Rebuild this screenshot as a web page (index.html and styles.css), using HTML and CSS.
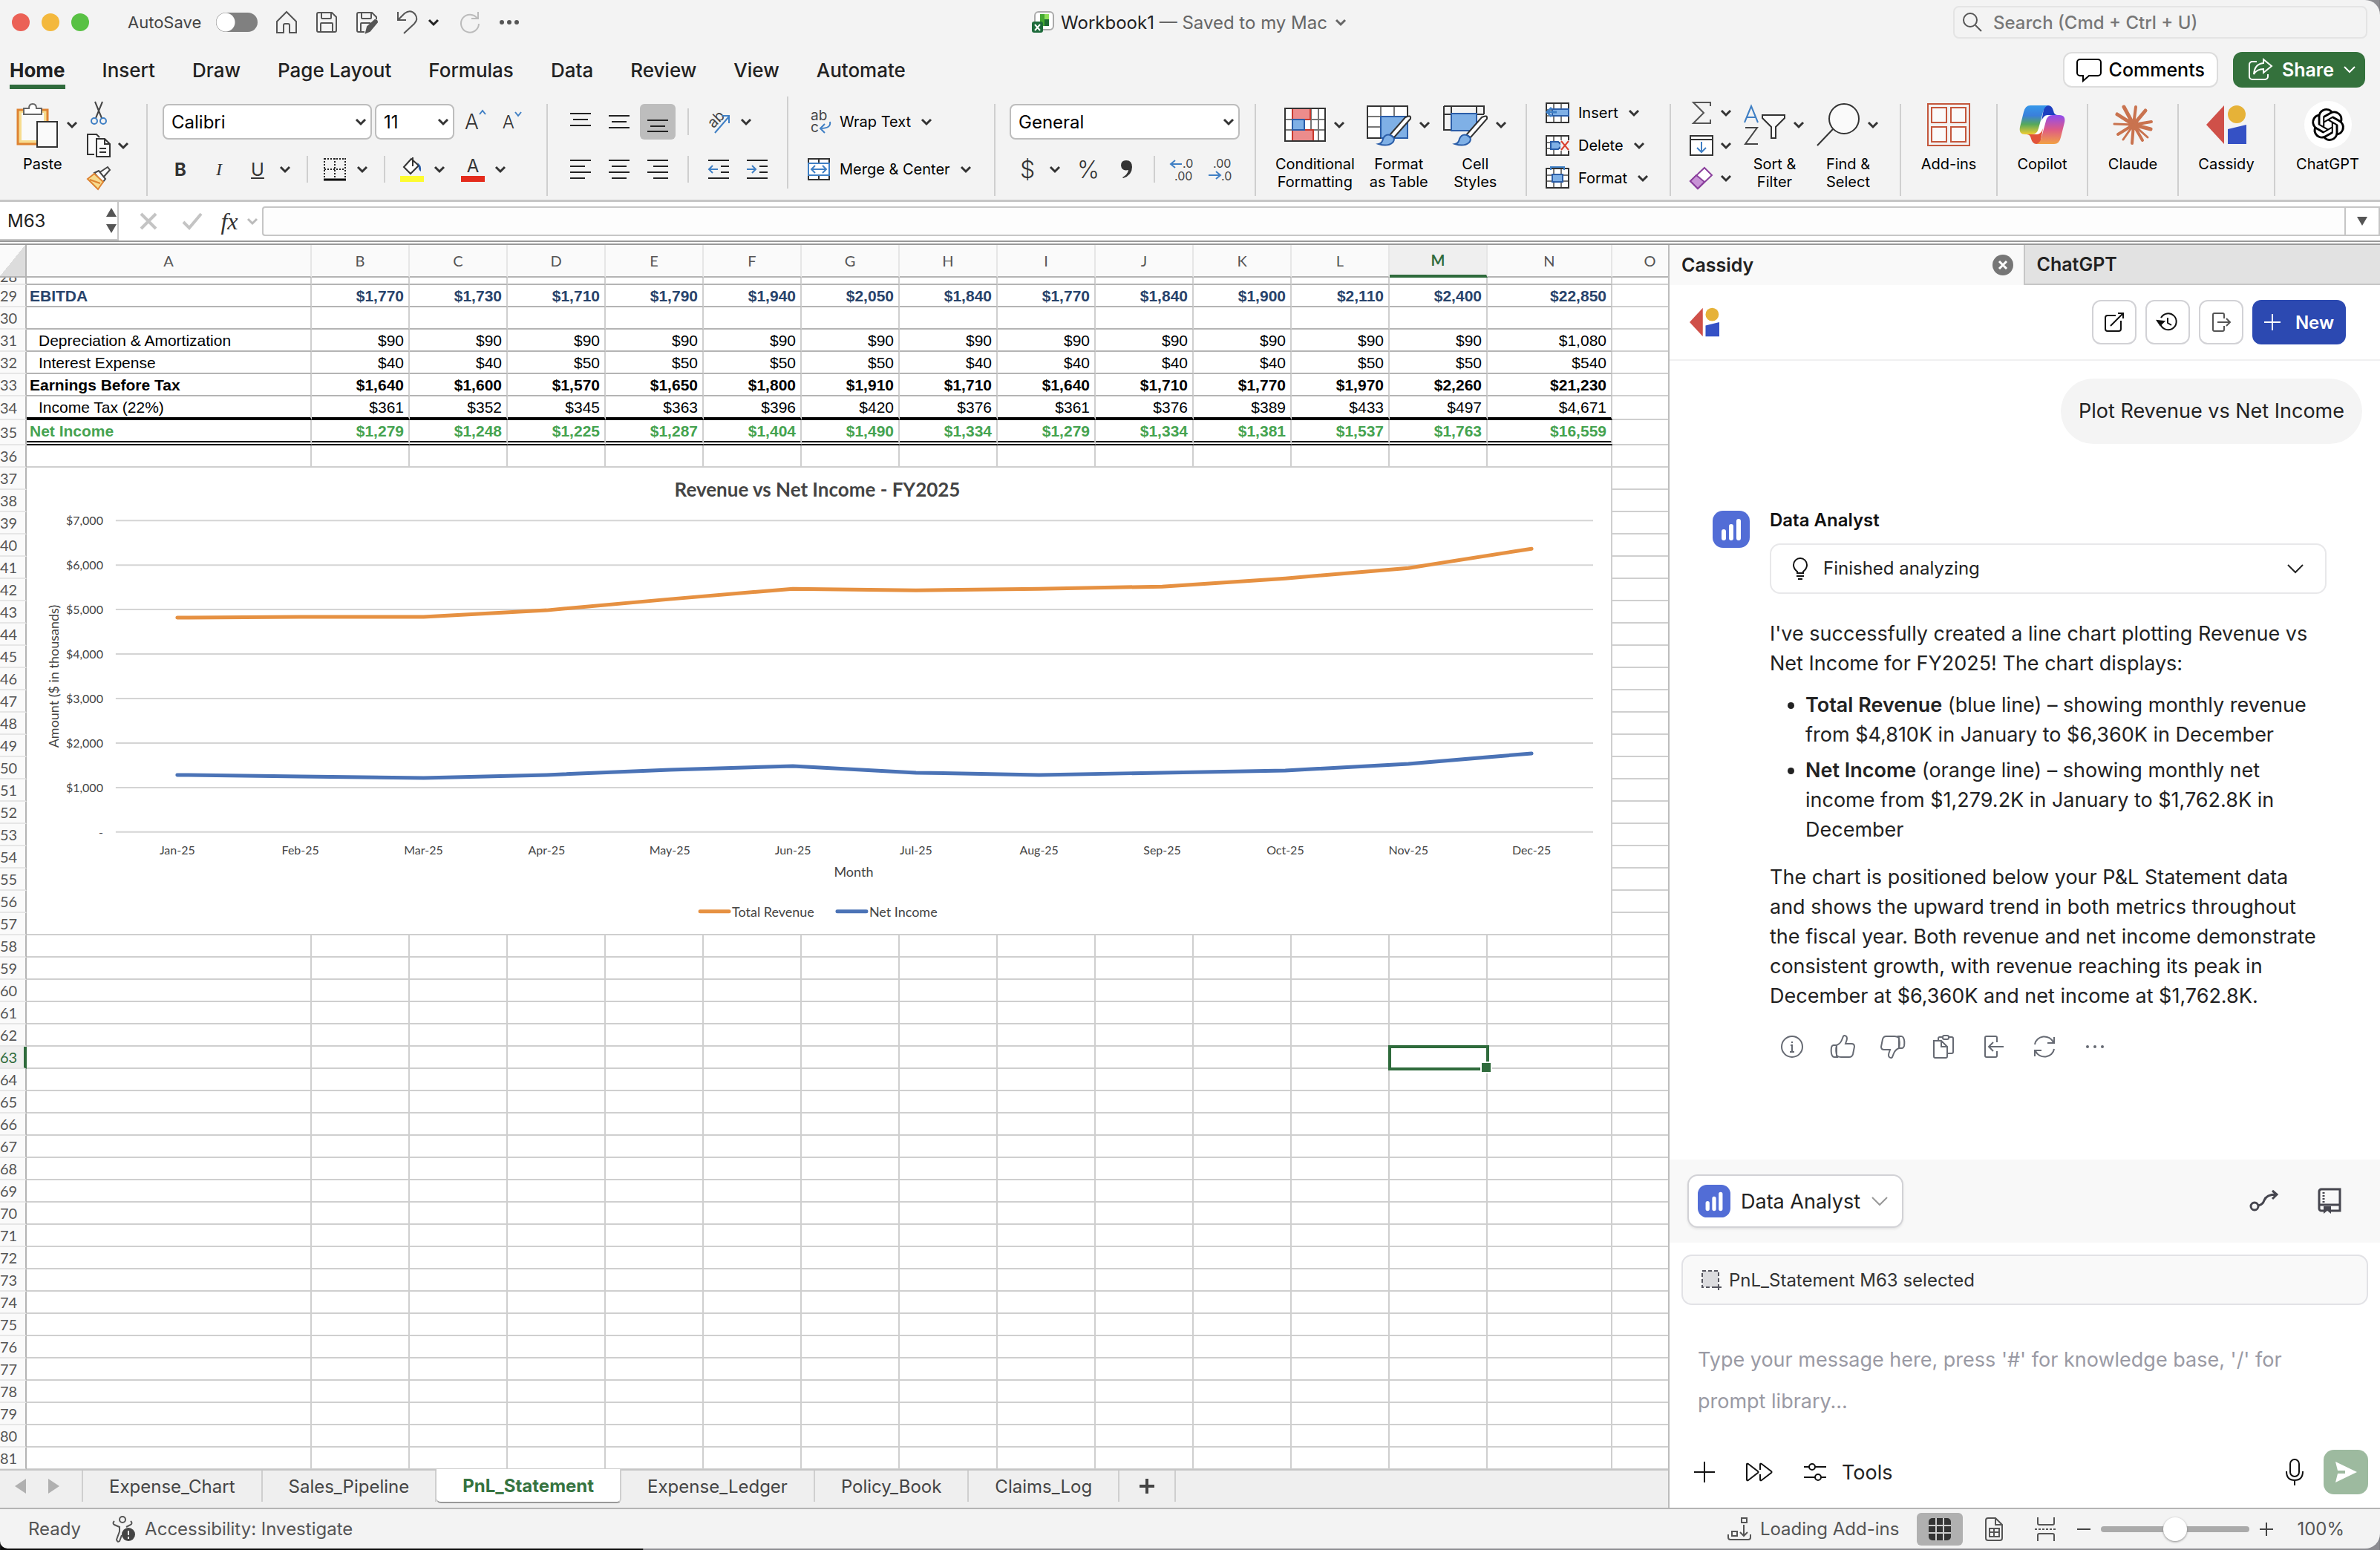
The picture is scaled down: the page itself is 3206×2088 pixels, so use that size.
FILE: index.html
```html
<!DOCTYPE html>
<html lang="en">
<head>
    <meta charset="UTF-8">
    <meta name="viewport" content="width=device-width, initial-scale=1.0">
    <title>Workbook1</title>
    <link rel="stylesheet" href="styles.css">
</head>
<body>
    <!-- Shared icons -->
    <svg class="sprite" aria-hidden="true">
        <symbol id="chev" viewBox="0 0 18 12"><path d="M3 3l6 6 6-6" fill="none" stroke="currentColor" stroke-width="3"/></symbol>
        <symbol id="chev-thin" viewBox="0 0 24 16"><path d="M2 3l10 10L22 3" fill="none" stroke="currentColor" stroke-width="2"/></symbol>
        <symbol id="cassidy" viewBox="0 0 54 54"><path d="M24 1v52L0 27z" fill="#cf5049"/><circle cx="41" cy="13" r="12" fill="#e6b238"/><path d="M29 33l25-6v26H29z" fill="#3551c5"/></symbol>
        <symbol id="bars" viewBox="0 0 50 50"><rect width="50" height="50" rx="14" fill="#526dd6"/><g stroke="#fff" stroke-width="6" stroke-linecap="round"><path d="M15 28v9M25 21v16M35 14v23"/></g></symbol>
        <symbol id="grid" viewBox="0 0 32 32"><rect x="1" y="3" width="30" height="26" fill="#fff"/><path d="M1 12h30M1 20h30M11 3v26M21 3v26" stroke="#777" stroke-width="2"/><path d="M1 3h30v26H1z" fill="none" stroke="#333" stroke-width="2"/></symbol>
    </svg>

    <div class="app">
        <header class="titlebar">
            <div class="title-left">
                <span class="light red"></span>
                <span class="light yellow"></span>
                <span class="light green"></span>
                <label class="autosave">AutoSave <input type="checkbox" class="switch"></label>
                <button aria-label="Home"><svg width="30" height="30" viewBox="0 0 30 30" class="line"><path d="M2 14L15 1l13 13v15h-9V19a2 2 0 0 0-2-2h-4a2 2 0 0 0-2 2v10H2z"/></svg></button>
                <button aria-label="Save"><svg width="30" height="30" viewBox="0 0 30 30" class="line"><path d="M4 2h18l6 6v18a2 2 0 0 1-2 2H4a2 2 0 0 1-2-2V4a2 2 0 0 1 2-2zM8 2v7a1 1 0 0 0 1 1h11a1 1 0 0 0 1-1V2M7 28V17a1 1 0 0 1 1-1h14a1 1 0 0 1 1 1v11"/></svg></button>
                <button aria-label="Save as"><svg width="30" height="30" viewBox="0 0 30 30" class="line"><path d="M12 28H4a2 2 0 0 1-2-2V4a2 2 0 0 1 2-2h18l6 6v3M8 2v7a1 1 0 0 0 1 1h11a1 1 0 0 0 1-1V2M7 28V17a1 1 0 0 1 1-1h12"/><path d="M14 29l2-8 10-9q3 0 3 3L19 27z" fill="#555"/></svg></button>
                <button aria-label="Undo" class="undo"><svg width="30" height="32" viewBox="0 0 30 32" class="line"><path d="M3 2v11h11M3 13L12 4q8-6 14 1 5 7-1 13L11 31"/></svg><svg width="18" height="12"><use href="#chev"/></svg></button>
                <button aria-label="Redo" class="dim"><svg width="30" height="30" viewBox="0 0 30 30" class="line"><path d="M27 1v9h-9M26 10A12 12 0 1 0 28 17"/></svg></button>
                <button aria-label="More"><svg width="30" height="8" viewBox="0 0 30 8"><g fill="#555"><circle cx="5" cy="4" r="3"/><circle cx="15" cy="4" r="3"/><circle cx="25" cy="4" r="3"/></g></svg></button>
            </div>
            <div class="title-center">
                <svg width="30" height="30" viewBox="0 0 30 30"><rect x="4" y="1" width="25" height="24" rx="5" fill="#fff" stroke="#aaa" stroke-width="2"/><path d="M11 4h12v16H11z" fill="#45a832"/><path d="M17 4h6v7h-6z" fill="#8fdf5a"/><path d="M17 11h6v9h-6z" fill="#1d6b34"/><rect y="14" width="15" height="15" rx="3" fill="#1e6b3c"/><path d="M4 18l7 8M11 18l-7 8" stroke="#fff" stroke-width="2"/></svg>
                <span>Workbook1 <span class="muted">— Saved to my Mac</span></span>
                <svg class="muted" width="18" height="12"><use href="#chev"/></svg>
            </div>
            <div class="title-right">
                <label class="search">
                    <svg width="28" height="28" viewBox="0 0 28 28" class="line"><circle cx="11" cy="11" r="9"/><path d="M18 18l8 8"/></svg>
                    <input type="text" placeholder="Search (Cmd + Ctrl + U)" aria-label="Search">
                </label>
            </div>
        </header>

        <nav class="menu">
            <a href="#" class="active">Home</a>
            <a href="#">Insert</a>
            <a href="#">Draw</a>
            <a href="#">Page Layout</a>
            <a href="#">Formulas</a>
            <a href="#">Data</a>
            <a href="#">Review</a>
            <a href="#">View</a>
            <a href="#">Automate</a>
            <div class="menu-actions">
                <button class="comments"><svg width="34" height="32" viewBox="0 0 34 32" fill="none" stroke="#000" stroke-width="2"><path d="M5 2h24a4 4 0 0 1 4 4v14a4 4 0 0 1-4 4H17l-8 7v-7H5a4 4 0 0 1-4-4V6a4 4 0 0 1 4-4z"/></svg>Comments</button>
                <button class="share"><svg width="34" height="30" viewBox="0 0 34 30" fill="none" stroke="#fff" stroke-width="2"><path d="M12 4H6a4 4 0 0 0-4 4v16a4 4 0 0 0 4 4h17a4 4 0 0 0 4-4v-3"/><path d="M21 1l11 9-11 9v-5q-9 0-13 7 1-14 13-15z"/></svg>Share<svg width="18" height="12" viewBox="0 0 18 12"><path d="M2 2l7 7 7-7" fill="none" stroke="#fff" stroke-width="2"/></svg></button>
            </div>
        </nav>

        <div class="ribbon">
            <!-- Clipboard -->
            <div class="group clipboard">
                <button class="big paste">
                    <span class="big-icon"><svg width="56" height="64" viewBox="0 0 56 64"><rect x="1" y="12" width="40" height="46" fill="#f7dc8f" stroke="#de8332" stroke-width="3"/><rect x="6" y="16" width="30" height="37" fill="#fafafa"/><path d="M9 18v-8h7q0-6 5-6t5 6h7v8z" fill="#fff" stroke="#666" stroke-width="2"/><rect x="27" y="28" width="27" height="34" fill="#fafafa" stroke="#333" stroke-width="2"/></svg><svg width="18" height="12"><use href="#chev"/></svg></span>
                    <span>Paste</span>
                </button>
                <div class="list">
                    <button aria-label="Cut"><svg width="32" height="32" viewBox="0 0 32 32" fill="none" stroke-width="2"><path d="M11 1l9 22M21 1l-9 22" stroke="#444"/><circle cx="10" cy="27" r="4" stroke="#3f7fc4"/><circle cx="22" cy="27" r="4" stroke="#3f7fc4"/></svg></button>
                    <button aria-label="Copy"><svg width="32" height="32" viewBox="0 0 32 32" fill="#fafafa" stroke="#333" stroke-width="2"><path d="M10 28H1V1h12l4 4"/><path d="M13 7h11l7 7v17H13z"/><path d="M24 7v7h7M17 20h9M17 25h9" fill="none"/></svg><svg width="18" height="12"><use href="#chev"/></svg></button>
                    <button aria-label="Format painter"><svg width="32" height="32" viewBox="0 0 32 32" fill="none" stroke-width="2"><path d="M16 9L28 1l3 4-9 10" fill="#fafafa" stroke="#444"/><path d="M10 9l6-3 9 11-4 5z" fill="#fafafa" stroke="#444"/><path d="M10 10L1 17l14 14 7-10z" fill="#f7dc8f" stroke="#de8332"/><path d="M4 18l14 5" stroke="#de8332"/></svg></button>
                </div>
            </div>
            <i class="vsep"></i>

            <!-- Font -->
            <div class="group font">
                <div class="row tight">
                    <select class="box font-name" aria-label="Font"><option>Calibri</option></select>
                    <select class="box font-size" aria-label="Font size"><option>11</option></select>
                    <button class="grow" aria-label="Increase font size">A<svg width="10" height="8" viewBox="0 0 10 8"><path d="M1 7l4-5 4 5" fill="none" stroke="#3f7fc4" stroke-width="2"/></svg></button>
                    <button class="grow small" aria-label="Decrease font size">A<svg width="10" height="8" viewBox="0 0 10 8"><path d="M1 1l4 5 4-5" fill="none" stroke="#3f7fc4" stroke-width="2"/></svg></button>
                </div>
                <div class="row glyphs">
                    <button class="glyph"><b>B</b></button>
                    <button class="glyph serif"><i>I</i></button>
                    <button class="glyph"><u>U</u></button>
                    <svg class="chev" width="18" height="12"><use href="#chev"/></svg>
                    <i class="rsep"></i>
                    <button class="glyph" aria-label="Borders"><svg width="30" height="32" viewBox="0 0 30 32"><path d="M1 2h28M1 16h28M1 1v28M15 1v28M29 1v28" stroke="#222" stroke-width="2" stroke-dasharray="2 2"/><path d="M0 30h30" stroke="#000" stroke-width="3"/></svg></button>
                    <svg class="chev" width="18" height="12"><use href="#chev"/></svg>
                    <i class="rsep"></i>
                    <button class="glyph" aria-label="Fill color"><svg width="32" height="34" viewBox="0 0 32 34"><path d="M15 3L5 14l9 9 11-11z" fill="#fff" stroke="#333" stroke-width="2"/><path d="M17 1v12" stroke="#333" stroke-width="2"/><path d="M23 8q6 3 5 12-4-2-3-8z" fill="#2a5da8"/><path d="M0 26h32v8H0z" fill="#fdfb2f"/></svg></button>
                    <svg class="chev" width="18" height="12"><use href="#chev"/></svg>
                    <button class="glyph fontcolor">A</button>
                    <svg class="chev" width="18" height="12"><use href="#chev"/></svg>
                </div>
            </div>
            <i class="vsep"></i>

            <!-- Alignment -->
            <div class="group align">
                <div class="row tight">
                    <button class="tile" aria-label="Top align"><svg width="28" height="28" viewBox="0 0 28 28" class="bold"><path d="M0 3h28M4 11h20M0 19h28"/></svg></button>
                    <button class="tile" aria-label="Middle align"><svg width="28" height="28" viewBox="0 0 28 28" class="bold"><path d="M0 6h28M4 14h20M0 22h28"/></svg></button>
                    <button class="tile on" aria-label="Bottom align"><svg width="28" height="28" viewBox="0 0 28 28" class="bold"><path d="M0 12h28M4 20h20M0 27h28"/></svg></button>
                    <i class="rsep"></i>
                    <button class="tile" aria-label="Orientation"><svg width="34" height="34" viewBox="0 0 34 34"><text x="3" y="22" font-size="20" fill="#444" transform="rotate(-45 12 16)">ab</text><path d="M12 32L31 10M31 19V9h-10" fill="none" stroke="#3f7fc4" stroke-width="2"/></svg></button>
                    <svg width="18" height="12"><use href="#chev"/></svg>
                </div>
                <div class="row tight">
                    <button class="tile" aria-label="Align left"><svg width="28" height="28" viewBox="0 0 28 28" class="bold"><path d="M0 2h28M0 10h20M0 18h28M0 26h20"/></svg></button>
                    <button class="tile" aria-label="Center"><svg width="28" height="28" viewBox="0 0 28 28" class="bold"><path d="M0 2h28M4 10h20M0 18h28M4 26h20"/></svg></button>
                    <button class="tile" aria-label="Align right"><svg width="28" height="28" viewBox="0 0 28 28" class="bold"><path d="M0 2h28M8 10h20M0 18h28M8 26h20"/></svg></button>
                    <i class="rsep"></i>
                    <button class="tile" aria-label="Decrease indent"><svg width="28" height="28" viewBox="0 0 28 28" class="bold"><path d="M0 2h28M17 10h11M17 18h11M0 26h28"/><path d="M13 14H1M6 9l-5 5 5 5" fill="none" stroke="#3f7fc4"/></svg></button>
                    <button class="tile" aria-label="Increase indent"><svg width="28" height="28" viewBox="0 0 28 28" class="bold"><path d="M0 2h28M17 10h11M17 18h11M0 26h28"/><path d="M0 14h12M7 9l5 5-5 5" fill="none" stroke="#3f7fc4"/></svg></button>
                </div>
            </div>
            <i class="vsep high"></i>

            <div class="group wrap">
                <button class="row label"><svg width="32" height="32" viewBox="0 0 32 32"><text x="5" y="14" font-size="19" fill="#444">ab</text><text x="5" y="30" font-size="19" fill="#444">c</text><path d="M31 16q2 9-13 9M24 19l-6 6 6 6" fill="none" stroke="#3f7fc4" stroke-width="2"/></svg>Wrap Text<svg width="18" height="12"><use href="#chev"/></svg></button>
                <button class="row label"><svg width="32" height="32" viewBox="0 0 32 32"><path d="M2 2h28v28H2zM16 2v28" fill="#fff" stroke="#333" stroke-width="2"/><path d="M2 8h28v16H2z" fill="#fff" stroke="#3f7fc4" stroke-width="2"/><path d="M7 16h18M11 11l-5 5 5 5M21 11l5 5-5 5" fill="none" stroke="#3f7fc4" stroke-width="2"/></svg>Merge &amp; Center<svg width="18" height="12"><use href="#chev"/></svg></button>
            </div>
            <i class="vsep"></i>

            <!-- Number -->
            <div class="group number">
                <div class="row">
                    <select class="box format" aria-label="Number format"><option>General</option></select>
                </div>
                <div class="row glyphs">
                    <button class="glyph thin">$</button>
                    <svg class="chev" width="18" height="12"><use href="#chev"/></svg>
                    <button class="glyph thin">%</button>
                    <button class="glyph" aria-label="Comma style"><svg width="20" height="28" viewBox="0 0 20 28"><path d="M9 2q8 0 8 9 0 11-12 15l-1-1q7-4 8-10-9 2-10-6 0-7 7-7z" fill="#333"/></svg></button>
                    <i class="rsep"></i>
                    <button class="glyph" aria-label="Increase decimal"><svg width="32" height="32" viewBox="0 0 32 32"><text x="17" y="14" font-size="16" fill="#444">.0</text><text x="6" y="31" font-size="16" fill="#444">.00</text><path d="M16 9H1M7 4L1 9l6 5" fill="none" stroke="#3f7fc4" stroke-width="2"/></svg></button>
                    <button class="glyph" aria-label="Decrease decimal"><svg width="32" height="32" viewBox="0 0 32 32"><text x="6" y="14" font-size="16" fill="#444">.00</text><text x="17" y="31" font-size="16" fill="#444">.0</text><path d="M0 24h16M10 19l6 5-6 5" fill="none" stroke="#3f7fc4" stroke-width="2"/></svg></button>
                </div>
            </div>
            <i class="vsep"></i>

            <!-- Styles -->
            <div class="group styles">
                <button class="big">
                    <span class="big-icon"><svg width="56" height="46" viewBox="0 0 56 46"><path d="M1 1h54v44H1zM11 1v44M36 1v44M46 1v44M1 16h54M1 30h54" fill="#fff" stroke="#777" stroke-width="2"/><path d="M11 1h24v15H11zM11 30h28v15H11z" fill="#ec8c8c" stroke="#c8382d" stroke-width="2"/><path d="M11 16h16v14H11z" fill="#7fb0e6" stroke="#2a5da8" stroke-width="2"/><path d="M1 1h54v44H1z" fill="none" stroke="#333" stroke-width="2"/></svg><svg width="18" height="12"><use href="#chev"/></svg></span>
                    <span>Conditional<br>Formatting</span>
                </button>
                <button class="big">
                    <span class="big-icon"><svg width="60" height="56" viewBox="0 0 60 56"><path d="M1 3h54v43H1zM19 3v43M37 3v43M1 17h54M1 31h54" fill="#fff" stroke="#777" stroke-width="2"/><path d="M19 17h36v29H19z" fill="#7fb0e6" stroke="#2a5da8" stroke-width="2"/><path d="M19 46H1V3h54v14" fill="none" stroke="#333" stroke-width="2"/><path d="M31 42L52 18q8-4 7 2L37 45z" fill="#fff" stroke="#333" stroke-width="2"/><path d="M16 54q5-1 6-7 3-7 10-5 8 4 3 10-7 6-19 2z" fill="#7fb0e6" stroke="#2a5da8" stroke-width="2"/></svg><svg width="18" height="12"><use href="#chev"/></svg></span>
                    <span>Format<br>as Table</span>
                </button>
                <button class="big">
                    <span class="big-icon"><svg width="60" height="56" viewBox="0 0 60 56"><path d="M1 3h54v11M1 3v32h9M1 14h54M11 3v32M45 3v11" fill="none" stroke="#333" stroke-width="2"/><path d="M11 13h34v23H11z" fill="#7fb0e6" stroke="#2a5da8" stroke-width="2"/><path d="M31 42L52 18q8-4 7 2L37 45z" fill="#fff" stroke="#333" stroke-width="2"/><path d="M16 54q5-1 6-7 3-7 10-5 8 4 3 10-7 6-19 2z" fill="#7fb0e6" stroke="#2a5da8" stroke-width="2"/></svg><svg width="18" height="12"><use href="#chev"/></svg></span>
                    <span>Cell<br>Styles</span>
                </button>
            </div>
            <i class="vsep"></i>

            <!-- Cells -->
            <div class="group cells">
                <div class="list">
                    <button><svg width="32" height="32"><use href="#grid"/><path d="M9 11h22v9H9z" fill="#7fb0e6" stroke="#2a5da8" stroke-width="2"/><path d="M15 15H2M8 9l-6 6 6 6" fill="none" stroke="#3f7fc4" stroke-width="3"/></svg>Insert<svg width="18" height="12"><use href="#chev"/></svg></button>
                    <button><svg width="32" height="32"><use href="#grid"/><path d="M7 11h10l5 5-5 5H7z" fill="#7fb0e6" stroke="#2a5da8" stroke-width="2"/><path d="M20 9h12v14H20z" fill="#f3f3f3"/><path d="M21 10l10 12M31 10L21 22" stroke="#d9402f" stroke-width="2"/></svg>Delete<svg width="18" height="12"><use href="#chev"/></svg></button>
                    <button><svg width="32" height="32"><use href="#grid"/><path d="M9 11h14v10H9z" fill="#7fb0e6" stroke="#2a5da8" stroke-width="2"/><path d="M7 1h18M7 0v5M25 0v5" stroke="#3f7fc4" stroke-width="2"/></svg>Format<svg width="18" height="12"><use href="#chev"/></svg></button>
                </div>
            </div>
            <i class="vsep"></i>

            <!-- Editing -->
            <div class="group editing">
                <div class="list snug">
                    <button aria-label="Sum"><svg width="32" height="32" viewBox="0 0 32 32" class="line"><path d="M28 7V2H5l14 14L5 30h23v-5"/></svg><svg width="18" height="12"><use href="#chev"/></svg></button>
                    <button aria-label="Fill"><svg width="32" height="32" viewBox="0 0 32 32" class="line"><path d="M1 3h30v26H1zM1 8h30" stroke="#333" fill="#fff"/><path d="M16 11v14M10 19l6 6 6-6" stroke="#3f7fc4"/></svg><svg width="18" height="12"><use href="#chev"/></svg></button>
                    <button aria-label="Clear"><svg width="32" height="32" viewBox="0 0 32 32" stroke="#8a3f9c" stroke-width="2"><path d="M20 2l10 10-19 18L1 20z" fill="#fff"/><path d="M9 12l11 9-9 9L1 20z" fill="#c893d6"/></svg><svg width="18" height="12"><use href="#chev"/></svg></button>
                </div>
                <button class="big">
                    <span class="big-icon"><svg width="56" height="56" viewBox="0 0 56 56"><path d="M1 25L10 3l9 22M4 18h12" fill="none" stroke="#3f7fc4" stroke-width="2"/><path d="M2 32h16L2 54h17" fill="none" stroke="#444" stroke-width="2"/><path d="M25 15h30v4L43 31v15h-6V31L25 19z" fill="#fafafa" stroke="#333" stroke-width="2"/></svg><svg width="18" height="12"><use href="#chev"/></svg></span>
                    <span>Sort &amp;<br>Filter</span>
                </button>
                <button class="big">
                    <span class="big-icon"><svg width="58" height="60" viewBox="0 0 58 60"><circle cx="37" cy="22" r="20" fill="#fafafa" stroke="#333" stroke-width="2"/><path d="M22 36L1 58" stroke="#333" stroke-width="2"/></svg><svg width="18" height="12"><use href="#chev"/></svg></span>
                    <span>Find &amp;<br>Select</span>
                </button>
            </div>
            <i class="vsep"></i>

            <!-- Add-ins -->
            <button class="group big addin">
                <span class="big-icon"><svg width="58" height="58" viewBox="0 0 58 58" fill="none" stroke="#c4573c" stroke-width="2"><path d="M1 1h56v56H1z"/><path d="M6 6h20v20H6zM32 6h20v20H32zM6 32h20v20H6zM32 32h20v20H32z" fill="#fafafa"/></svg></span>
                <span>Add-ins</span>
            </button>
            <i class="vsep"></i>
            <button class="group big addin narrow">
                <span class="big-icon"><svg width="60" height="52" viewBox="0 0 60 52">
                    <defs>
                        <linearGradient id="copA" x1="0" y1="0" x2="0" y2="1"><stop offset="0" stop-color="#3598ea"/><stop offset=".35" stop-color="#3a7fdb"/><stop offset=".65" stop-color="#55a85c"/><stop offset="1" stop-color="#f0cc30"/></linearGradient>
                        <linearGradient id="copB" x1="0" y1="1" x2="0" y2="0"><stop offset="0" stop-color="#8f4cf0"/><stop offset=".5" stop-color="#de5a86"/><stop offset="1" stop-color="#f2a244"/></linearGradient>
                    </defs>
                    <path d="M31 12h8L29 40h-8z" fill="#fff"/>
                    <path d="M31 0h7q5 0 7 7 1 6 6 6H37q-5 0-8 8l3-16z" fill="#1d3fc0"/>
                    <path d="M29 52h-7q-5 0-7-7-1-6-6-6h14q5 0 8-8l-3 16z" fill="#e2543a"/>
                    <path d="M14 0h24q-5 1-7 9l-6 22q-2 8-9 8H7q-9 0-7-10L5 9q2-9 9-9z" fill="url(#copA)"/>
                    <path d="M14 0h24q-5 1-7 9l-6 22q-2 8-9 8H7q-9 0-7-10L5 9q2-9 9-9z" fill="url(#copB)" transform="rotate(180 30 26)"/>
                </svg></span>
                <span>Copilot</span>
            </button>
            <i class="vsep"></i>
            <button class="group big addin narrow">
                <span class="big-icon"><svg width="54" height="54" viewBox="0 0 54 54" stroke="#c9734f" stroke-linecap="round" fill="#c9734f"><circle cx="28" cy="27" r="7" stroke="none"/><path d="M28 27L15 3M28 27L6 13M28 27L44 8M28 27L51 33" stroke-width="5"/><path d="M28 27L31 3M28 27L52 23M28 27L40 48M28 27L26 52M28 27L7 40" stroke-width="4"/><path d="M28 27L47 44M28 27L14 47M28 27L2 26" stroke-width="3"/></svg></span>
                <span>Claude</span>
            </button>
            <i class="vsep"></i>
            <button class="group big addin">
                <span class="big-icon"><svg width="54" height="54"><use href="#cassidy"/></svg></span>
                <span>Cassidy</span>
            </button>
            <i class="vsep"></i>
            <button class="group big addin last">
                <span class="big-icon round"><svg width="44" height="44" viewBox="0 0 24 24"><path d="M22.2819 9.8211a5.9847 5.9847 0 0 0-.5157-4.9108 6.0462 6.0462 0 0 0-6.5098-2.9A6.0651 6.0651 0 0 0 4.9807 4.1818a5.9847 5.9847 0 0 0-3.9977 2.9 6.0462 6.0462 0 0 0 .7427 7.0966 5.98 5.98 0 0 0 .511 4.9107 6.051 6.051 0 0 0 6.5146 2.9001A5.9847 5.9847 0 0 0 13.2599 24a6.0557 6.0557 0 0 0 5.7718-4.2058 5.9894 5.9894 0 0 0 3.9977-2.9001 6.0557 6.0557 0 0 0-.7475-7.0729zm-9.022 12.6081a4.4755 4.4755 0 0 1-2.8764-1.0408l.1419-.0804 4.7783-2.7582a.7948.7948 0 0 0 .3927-.6813v-6.7369l2.02 1.1686a.071.071 0 0 1 .038.052v5.5826a4.504 4.504 0 0 1-4.4945 4.4944zm-9.6607-4.1254a4.4708 4.4708 0 0 1-.5346-3.0137l.142.0852 4.783 2.7582a.7712.7712 0 0 0 .7806 0l5.8428-3.3685v2.3324a.0804.0804 0 0 1-.0332.0615L9.74 19.9502a4.4992 4.4992 0 0 1-6.1408-1.6464zM2.3408 7.8956a4.485 4.485 0 0 1 2.3655-1.9728V11.6a.7664.7664 0 0 0 .3879.6765l5.8144 3.3543-2.0201 1.1685a.0757.0757 0 0 1-.071 0l-4.8303-2.7865A4.504 4.504 0 0 1 2.3408 7.872zm16.5963 3.8558L13.1038 8.364 15.1192 7.2a.0757.0757 0 0 1 .071 0l4.8303 2.7913a4.4944 4.4944 0 0 1-.6765 8.1042v-5.6772a.79.79 0 0 0-.407-.667zm2.0107-3.0231l-.142-.0852-4.7735-2.7818a.7759.7759 0 0 0-.7854 0L9.409 9.2297V6.8974a.0662.0662 0 0 1 .0284-.0615l4.8303-2.7866a4.4992 4.4992 0 0 1 6.6802 4.66zM8.3065 12.863l-2.02-1.1638a.0804.0804 0 0 1-.038-.0567V6.0742a4.4992 4.4992 0 0 1 7.3757-3.4537l-.142.0805L8.704 5.459a.7948.7948 0 0 0-.3927.6813zm1.0976-2.3654l2.602-1.4998 2.6069 1.4998v2.9994l-2.5974 1.4997-2.6067-1.4997Z"/></svg></span>
                <span>ChatGPT</span>
            </button>
        </div>

        <div class="formula-bar">
            <div class="name-box">
                <input type="text" value="M63" aria-label="Name box">
                <svg width="16" height="36" viewBox="0 0 16 36" fill="#555"><path d="M8 1l7 12H1zM8 35l7-12H1z"/></svg>
            </div>
            <button aria-label="Cancel"><svg width="24" height="24" viewBox="0 0 24 24" stroke="#c4c4c4" stroke-width="4"><path d="M2 2l20 20M22 2L2 22"/></svg></button>
            <button aria-label="Enter"><svg width="28" height="24" viewBox="0 0 28 24" fill="none" stroke="#c4c4c4" stroke-width="4"><path d="M2 13l8 8L26 2"/></svg></button>
            <button class="fx"><i>fx</i></button>
            <svg class="fx-chev" width="18" height="12"><use href="#chev"/></svg>
            <input type="text" class="formula" aria-label="Formula">
            <button class="expand" aria-label="Expand formula bar"><svg width="14" height="12" viewBox="0 0 14 12"><path d="M0 0h14L7 12z" fill="#555"/></svg></button>
        </div>

        <main class="workspace">
            <section class="sheet">
                <div class="cells-view">
                    <table class="cells-table">
                        <colgroup id="cols"></colgroup>
                        <thead><tr id="colHeads"></tr></thead>
                        <tbody id="rows"></tbody>
                    </table>
                </div>
                <div class="sheet-tabs">
                    <div class="arrows">
                        <button aria-label="Previous sheet"><svg width="16" height="20" viewBox="0 0 16 20"><path d="M15 0v20L0 10z" fill="#b0b0b0"/></svg></button>
                        <button aria-label="Next sheet"><svg width="16" height="20" viewBox="0 0 16 20"><path d="M1 0v20l15-10z" fill="#b0b0b0"/></svg></button>
                    </div>
                    <button>Expense_Chart</button>
                    <button>Sales_Pipeline</button>
                    <button class="active">PnL_Statement</button>
                    <button>Expense_Ledger</button>
                    <button>Policy_Book</button>
                    <button>Claims_Log</button>
                    <button class="add" aria-label="Add sheet"><svg width="20" height="20" viewBox="0 0 20 20"><path d="M10 0v20M0 10h20" stroke="#444" stroke-width="4"/></svg></button>
                </div>
            </section>

            <aside class="pane">
                <div class="pane-tabs">
                    <button class="active">Cassidy<svg width="28" height="28" viewBox="0 0 28 28"><circle cx="14" cy="14" r="14" fill="#767676"/><path d="M9 9l10 10M19 9L9 19" stroke="#fff" stroke-width="3"/></svg></button>
                    <button>ChatGPT</button>
                </div>
                <div class="pane-head">
                    <svg width="40" height="40"><use href="#cassidy"/></svg>
                    <div class="pane-actions">
                        <button aria-label="Open"><svg width="28" height="28" viewBox="0 0 28 28" class="dark"><path d="M16 5H5a3 3 0 0 0-3 3v15a3 3 0 0 0 3 3h15a3 3 0 0 0 3-3V12M9 19L26 2M19 2h7v7"/></svg></button>
                        <button aria-label="History"><svg width="30" height="28" viewBox="0 0 30 28" class="dark"><path d="M5 16a11 11 0 1 0 1-8M15 8v7l5 3"/><path d="M1 12l4 6 5-5z" fill="#111"/></svg></button>
                        <button aria-label="Export"><svg width="28" height="28" viewBox="0 0 28 28" class="line"><path d="M18 9V4a2 2 0 0 0-2-2H5a2 2 0 0 0-2 2v20a2 2 0 0 0 2 2h11a2 2 0 0 0 2-2v-5M9 14h17M21 9l5 5-5 5"/></svg></button>
                        <button class="new"><svg width="22" height="22" viewBox="0 0 22 22"><path d="M11 0v22M0 11h22" stroke="#fff" stroke-width="2"/></svg>New</button>
                    </div>
                </div>
                <div class="chat">
                    <p class="bubble">Plot Revenue vs Net Income</p>
                    <div class="reply">
                        <svg class="avatar" width="50" height="50"><use href="#bars"/></svg>
                        <div class="reply-body">
                            <h2>Data Analyst</h2>
                            <button class="status">
                                <svg width="22" height="32" viewBox="0 0 22 32" class="dark"><path d="M7 20q-5-4-5-9a9 9 0 0 1 18 0q0 5-5 9v2H7zM6 26h10M8 30h6"/></svg>
                                Finished analyzing
                                <svg class="end" width="24" height="16"><use href="#chev-thin"/></svg>
                            </button>
                            <p>I've successfully created a line chart plotting Revenue vs Net Income for FY2025! The chart displays:</p>
                            <ul>
                                <li><b>Total Revenue</b> (blue line) – showing monthly revenue from $4,810K in January to $6,360K in December</li>
                                <li><b>Net Income</b> (orange line) – showing monthly net income from $1,279.2K in January to $1,762.8K in December</li>
                            </ul>
                            <p>The chart is positioned below your P&amp;L Statement data and shows the upward trend in both metrics throughout the fiscal year. Both revenue and net income demonstrate consistent growth, with revenue reaching its peak in December at $6,360K and net income at $1,762.8K.</p>
                            <div class="reactions">
                                <button aria-label="Info"><svg width="32" height="32" viewBox="0 0 32 32" class="soft"><circle cx="16" cy="16" r="14"/><path d="M14 14h2v9M13 23h6M16 9v2"/></svg></button>
                                <button aria-label="Like"><svg width="34" height="34" viewBox="0 0 34 34" class="soft"><path d="M9 15q5-2 7-7l2-5q1-2 4 0 2 2 0 7l-1 3h8q4 0 4 4l-2 10q-1 4-5 4H15q-3 0-6-2z"/><path d="M9 15H5q-2 0-3 3-1 7 1 11 1 2 3 2h4q-3-8-1-16z"/></svg></button>
                                <button aria-label="Dislike"><svg width="34" height="34" viewBox="0 0 34 34" class="soft"><g transform="rotate(180 17 17)"><path d="M9 15q5-2 7-7l2-5q1-2 4 0 2 2 0 7l-1 3h8q4 0 4 4l-2 10q-1 4-5 4H15q-3 0-6-2z"/><path d="M9 15H5q-2 0-3 3-1 7 1 11 1 2 3 2h4q-3-8-1-16z"/></g></svg></button>
                                <button aria-label="Copy"><svg width="30" height="34" viewBox="0 0 30 34" class="soft"><path d="M3 9h9l8 8v13a2 2 0 0 1-2 2H4a2 2 0 0 1-2-2V9zM12 9v8h8M8 8V6a2 2 0 0 1 2-2h4M22 4h4a2 2 0 0 1 2 2v18a2 2 0 0 1-2 2h-5"/><rect x="14" y="2" width="8" height="5" rx="2"/></svg></button>
                                <button aria-label="Insert"><svg width="28" height="32" viewBox="0 0 28 32" class="soft"><path d="M18 10V4a2 2 0 0 0-2-2H4a2 2 0 0 0-2 2v24a2 2 0 0 0 2 2h12a2 2 0 0 0 2-2v-6M27 16H8M13 10l-6 6 6 6"/></svg></button>
                                <button aria-label="Retry"><svg width="32" height="30" viewBox="0 0 32 30" class="soft"><path d="M3 12A13 12 0 0 1 28 9M29 2v8h-9M29 18A13 12 0 0 1 4 21M3 28v-8h9"/></svg></button>
                                <button aria-label="More"><svg width="28" height="8" viewBox="0 0 28 8" fill="#666a73"><circle cx="4" cy="4" r="2"/><circle cx="14" cy="4" r="2"/><circle cx="24" cy="4" r="2"/></svg></button>
                            </div>
                        </div>
                    </div>
                </div>
                <div class="agent-bar">
                    <button class="agent"><svg width="44" height="44"><use href="#bars"/></svg>Data Analyst<svg class="faint" width="24" height="16"><use href="#chev-thin"/></svg></button>
                    <div class="agent-tools">
                        <button aria-label="Workflows"><svg width="40" height="30" viewBox="0 0 40 30" fill="none" stroke="#46464f" stroke-width="3"><circle cx="7" cy="22" r="5"/><path d="M12 21q6-1 8-7 3-8 16-8M31 1l6 5-6 6"/></svg></button>
                        <button aria-label="Library"><svg width="32" height="36" viewBox="0 0 32 36" fill="none" stroke="#46464f" stroke-width="3"><path d="M8 31H5a3 3 0 0 1-3-3V5a3 3 0 0 1 3-3h25v29H18M2 23h28"/><path d="M8 6v15" stroke-dasharray="2 2"/><path d="M8 25h10v10l-5-4-5 4z" fill="#46464f" stroke="none"/></svg></button>
                    </div>
                </div>
                <div class="composer">
                    <div class="context"><svg width="28" height="28" viewBox="0 0 28 28"><rect x="2" y="2" width="22" height="22" fill="#dcdcdf" stroke="#55555f" stroke-width="2" stroke-dasharray="5 3"/><path d="M24 20v8M20 24h8" stroke="#55555f" stroke-width="2"/></svg>PnL_Statement M63 selected</div>
                    <textarea rows="2" aria-label="Message" placeholder="Type your message here, press '#' for knowledge base, '/' for prompt library..."></textarea>
                    <div class="composer-bar">
                        <button aria-label="Add"><svg width="30" height="30" viewBox="0 0 30 30" class="dark"><path d="M15 1v28M1 15h28"/></svg></button>
                        <button aria-label="Run"><svg width="38" height="26" viewBox="0 0 38 26" class="dark"><path d="M2 3v20q0 2 2 1l13-10q1-1 0-2L4 2Q2 1 2 3zM20 10V3q0-2 2-1l13 10q1 1 0 2L22 24q-2 1-2-1v-7"/></svg></button>
                        <button class="tools"><svg width="32" height="26" viewBox="0 0 32 26" class="dark"><path d="M1 6h7M16 6h15M1 20h15M24 20h7"/><circle cx="12" cy="6" r="4"/><circle cx="20" cy="20" r="4"/></svg>Tools</button>
                        <button class="mic" aria-label="Dictate"><svg width="26" height="36" viewBox="0 0 26 36" class="dark"><rect x="7" y="1" width="12" height="23" rx="6"/><path d="M2 17q0 12 11 12t11-12M13 29v7"/></svg></button>
                        <button class="send" aria-label="Send"><svg width="32" height="30" viewBox="0 0 32 30"><path d="M2 1l29 14L2 29l3-12h10v-4H5z" fill="#fff"/></svg></button>
                    </div>
                </div>
            </aside>
        </main>

        <footer class="statusbar">
            <span>Ready</span>
            <button class="access"><svg width="32" height="36" viewBox="0 0 32 36" fill="none" stroke="#555" stroke-width="2"><circle cx="14" cy="5" r="4"/><path d="M3 7q-3 3 0 5l7 3v6L6 32q1 4 4 2l3-8M25 7q3 3 0 5l-6 3"/><circle cx="22" cy="25" r="9" fill="#444" stroke="none"/><path d="M22 20v6M22 28v3" stroke="#fff"/></svg>Accessibility: Investigate</button>
            <div class="status-right">
                <span class="loading"><svg width="32" height="32" viewBox="0 0 32 32" fill="none" stroke="#555" stroke-width="2"><path d="M1 23v4q0 3 3 3h24q3 0 3-3v-4M22 10v15M17 20l5 5 5-5"/><rect x="19" y="1" width="7" height="6"/><rect x="6" y="19" width="7" height="6"/></svg>Loading Add-ins</span>
                <button class="view on" aria-label="Normal view"><svg width="30" height="30" viewBox="0 0 30 30"><rect width="30" height="30" rx="5" fill="#333"/><path d="M10 0v30M20 0v30M0 10h30M0 20h30" stroke="#ccc" stroke-width="2"/></svg></button>
                <button class="view" aria-label="Page layout view"><svg width="26" height="32" viewBox="0 0 26 32" class="line"><path d="M15 1H5a3 3 0 0 0-3 3v24a3 3 0 0 0 3 3h16a3 3 0 0 0 3-3V10zM15 1v9h9M7 15h13v11H7zM7 20h13M13 15v11"/></svg></button>
                <button class="view" aria-label="Page break view"><svg width="30" height="32" viewBox="0 0 30 32" class="line"><path d="M4 0v8q0 2 2 2h18q2 0 2-2V0M4 32v-8q0-2 2-2h18q2 0 2 2v8"/><path d="M0 16h30" stroke-dasharray="3 2"/></svg></button>
                <button aria-label="Zoom out"><svg width="18" height="18" viewBox="0 0 18 18"><path d="M0 9h18" stroke="#444" stroke-width="2"/></svg></button>
                <input type="range" class="zoom" min="0" max="100" value="50" aria-label="Zoom">
                <button aria-label="Zoom in"><svg width="18" height="18" viewBox="0 0 18 18"><path d="M9 0v18M0 9h18" stroke="#444" stroke-width="2"/></svg></button>
                <span class="percent">100%</span>
            </div>
        </footer>
    </div>

    <script>
        const columns = 'ABCDEFGHIJKLMNO'.split('');
        const months = ['Jan', 'Feb', 'Mar', 'Apr', 'May', 'Jun', 'Jul', 'Aug', 'Sep', 'Oct', 'Nov', 'Dec'];
        const revenue = [4810, 4830, 4830, 4980, 5240, 5460, 5440, 5460, 5520, 5700, 5940, 6360];
        const netIncome = [1279, 1248, 1225, 1287, 1404, 1490, 1334, 1279, 1334, 1381, 1537, 1763];

        const data = {
            29: { cls: 'ebitda', label: 'EBITDA', values: [1770, 1730, 1710, 1790, 1940, 2050, 1840, 1770, 1840, 1900, 2110, 2400, 22850] },
            31: { cls: 'indent', label: 'Depreciation & Amortization', values: [90, 90, 90, 90, 90, 90, 90, 90, 90, 90, 90, 90, 1080] },
            32: { cls: 'indent', label: 'Interest Expense', values: [40, 40, 50, 50, 50, 50, 40, 40, 40, 40, 50, 50, 540] },
            33: { cls: 'strong', label: 'Earnings Before Tax', values: [1640, 1600, 1570, 1650, 1800, 1910, 1710, 1640, 1710, 1770, 1970, 2260, 21230] },
            34: { cls: 'indent tax', label: 'Income Tax (22%)', values: [361, 352, 345, 363, 396, 420, 376, 361, 376, 389, 433, 497, 4671] },
            35: { cls: 'net', label: 'Net Income', values: [...netIncome, 16559] }
        };

        function money(n) {
            return '$' + n.toLocaleString('en-US');
        }

        // Chart covers rows 37-57, columns A-N
        function chart() {
            const x = i => 203 + i * 166;
            const y = v => Math.round(491 - v * 0.06);
            const points = list => list.map((v, i) => `${x(i)},${y(v)}`).join(' ');
            let svg = '<svg class="chart" viewBox="0 0 2136 628" role="img" aria-label="Revenue vs Net Income">';
            svg += '<text class="chart-title" x="1066" y="39">Revenue vs Net Income - FY2025</text>';
            for (let v = 0; v <= 7000; v += 1000) {
                svg += `<line class="gridline" x1="120" x2="2112" y1="${y(v)}" y2="${y(v)}"/>`;
                svg += `<text class="tick end" x="103" y="${y(v) + 6}">${v ? money(v) : '-'}</text>`;
            }
            months.forEach((m, i) => {
                svg += `<text class="tick mid" x="${x(i)}" y="521">${m}-25</text>`;
            });
            svg += `<polyline class="series orange" points="${points(revenue)}"/>`;
            svg += `<polyline class="series blue" points="${points(netIncome)}"/>`;
            svg += '<text class="axis mid" x="1115" y="551">Month</text>';
            svg += '<text class="axis mid" transform="translate(43 281) rotate(-90)">Amount ($ in thousands)</text>';
            svg += '<line class="series orange" x1="908" x2="947" y1="598" y2="598"/><text class="axis" x="951" y="605">Total Revenue</text>';
            svg += '<line class="series blue" x1="1093" x2="1132" y1="598" y2="598"/><text class="axis" x="1136" y="605">Net Income</text>';
            return svg + '</svg>';
        }

        document.getElementById('cols').innerHTML = '<col class="col-head">' +
            columns.map(c => `<col class="${c === 'A' ? 'col-a' : c === 'N' ? 'col-n' : c === 'O' ? 'col-o' : 'col-m'}">`).join('');
        document.getElementById('colHeads').innerHTML = '<th class="corner"></th>' +
            columns.map(c => `<th class="${c === 'M' ? 'selected' : ''}">${c}</th>`).join('');

        let html = '';
        for (let r = 28; r <= 81; r++) {
            const row = data[r];
            const cls = (row ? row.cls : '') + (r < 36 ? ' framed' : '') + (r === 28 ? ' cut' : '') + (r === 63 ? ' current' : '');
            html += `<tr class="${cls}"><th><span>${r}</span></th>`;
            if (r === 37) {
                html += `<td class="chart-cell" colspan="14" rowspan="21">${chart()}</td><td></td>`;
            } else if (r > 37 && r < 58) {
                html += '<td></td>';
            } else {
                columns.forEach((c, i) => {
                    let text = '';
                    if (row && i === 0) text = row.label.replace('&', '&amp;');
                    if (row && i > 0 && i < 14) text = money(row.values[i - 1]);
                    html += `<td class="${r === 63 && c === 'M' ? 'cursor' : ''}">${text}</td>`;
                });
            }
            html += '</tr>';
        }
        document.getElementById('rows').innerHTML = html;
    </script>
</body>
</html>
```

FILE: styles.css
```css
* {
    box-sizing: border-box;
}

body {
    margin: 0;
    background: linear-gradient(to right, #0d0d0d 27%, #8d8d92 27%);
    font-family: Inter, "Liberation Sans", sans-serif;
    font-size: 24px;
    color: #222;
}

button,
input,
select,
textarea {
    font: inherit;
    color: inherit;
}

button {
    display: flex;
    align-items: center;
    padding: 0;
    border: none;
    background: none;
}

svg {
    flex: none;
    display: block;
    overflow: visible;
}

.sprite {
    position: absolute;
    width: 0;
    height: 0;
}

.line,
.dark,
.soft {
    fill: none;
    stroke: #555;
    stroke-width: 2px;
}

.dark {
    stroke: #111;
}

.soft {
    stroke: #666a73;
}

.bold {
    stroke: #222;
    stroke-width: 2px;
}

.muted {
    color: #666;
}

.app {
    display: flex;
    flex-direction: column;
    height: calc(100vh - 2px);
    background: #f3f3f3;
    border-radius: 0 20px 20px 10px;
    overflow: hidden;
}

/* Title bar */
.titlebar {
    display: grid;
    grid-template-columns: 1fr auto 1fr;
    align-items: center;
    height: 60px;
    padding: 0 17px 0 16px;
}

.title-left {
    display: flex;
    align-items: center;
    gap: 24px;
}

.light {
    width: 24px;
    height: 24px;
    margin-right: -8px;
    border-radius: 50%;
}

.red { background: #eb6156; }
.yellow { background: #f3b83d; }
.green { background: #58c144; }

.autosave {
    display: flex;
    align-items: center;
    gap: 20px;
    margin-left: 36px;
    font-size: 22px;
    color: #444;
}

.switch {
    appearance: none;
    width: 56px;
    height: 26px;
    margin: 0;
    border-radius: 13px;
    background: radial-gradient(circle at 13px 13px, #fff 12px, #808080 13px);
}

.undo {
    gap: 12px;
}

.dim {
    opacity: 0.35;
}

.title-center {
    display: flex;
    align-items: center;
    gap: 9px;
}

.title-right {
    display: flex;
    justify-content: flex-end;
}

.search {
    display: flex;
    align-items: center;
    gap: 14px;
    width: 558px;
    height: 44px;
    padding-left: 10px;
    border: 2px solid #e4e4e4;
    border-radius: 8px;
}

.search input {
    flex: 1;
    padding: 0;
    border: none;
    background: none;
    font-weight: 500;
}

.search input::placeholder {
    color: #777;
}

/* Menu */
.menu {
    display: flex;
    align-items: center;
    gap: 50px;
    height: 64px;
    padding: 0 20px 0 13px;
    font-size: 26px;
    font-weight: 500;
}

.menu a {
    padding-top: 12px;
    border-bottom: 6px solid transparent;
    line-height: 38px;
    color: #222;
    text-decoration: none;
}

.menu a.active {
    border-color: #2f6b3c;
    font-weight: 700;
}

.menu-actions {
    display: flex;
    gap: 20px;
    margin-left: auto;
    padding-top: 4px;
}

.comments,
.share {
    gap: 10px;
    height: 48px;
    padding: 0 16px;
    border: 2px solid #dcdcdc;
    border-radius: 12px;
    background: #fff;
    font-size: 25px;
    color: #000;
}

.share {
    gap: 12px;
    padding: 0 12px 0 20px;
    border: none;
    background: #34713c;
    color: #fff;
    font-weight: 600;
}

/* Ribbon */
.ribbon {
    display: flex;
    height: 148px;
    padding-top: 12px;
    border-bottom: 3px solid #c6c6c6;
    font-size: 20px;
    color: #000;
}

.group {
    flex: none;
    color: #000;
}

.ribbon svg {
    color: #333;
}

.vsep {
    flex: none;
    width: 2px;
    height: 124px;
    margin-top: 4px;
    background: #cfcfcf;
}

.vsep.high {
    margin-top: -6px;
}

.rsep {
    width: 2px;
    height: 36px;
    background: #cfcfcf;
}

.row {
    display: flex;
    align-items: center;
    height: 48px;
    margin-top: 4px;
}

.row + .row {
    margin-top: 16px;
}

.tight {
    gap: 4px;
}

.tight .rsep {
    margin: 0 12px;
}

.glyphs {
    gap: 20px;
    padding-left: 8px;
}

.chev {
    margin-left: -8px;
}

.glyph {
    justify-content: center;
    width: 32px;
    font-size: 24px;
    color: #333;
}

.thin {
    font-size: 32px;
    font-weight: 300;
}

.serif {
    font-family: "Liberation Serif", serif;
}

.fontcolor {
    height: 34px;
    border-bottom: 8px solid #e42b1c;
    line-height: 24px;
}

.tile {
    justify-content: center;
    width: 48px;
    height: 48px;
    border-radius: 6px;
}

.tile.on {
    background: #bdbdbd;
}

.box {
    appearance: none;
    height: 48px;
    padding: 0 10px;
    border: 2px solid #bdbdbd;
    border-radius: 8px;
    background: #fff url("data:image/svg+xml,%3Csvg xmlns='http://www.w3.org/2000/svg' width='16' height='12'%3E%3Cpath d='M2 3l6 6 6-6' fill='none' stroke='%23333' stroke-width='3'/%3E%3C/svg%3E") no-repeat right 5px center;
    font-size: 24px;
}

.font-name { width: 282px; }
.font-size { width: 107px; }
.format { width: 310px; }

.grow {
    align-items: flex-start;
    margin-left: 10px;
    font-size: 28px;
    font-weight: 300;
    color: #333;
}

.grow.small {
    margin-left: 18px;
    font-size: 24px;
}

.clipboard {
    display: flex;
    gap: 11px;
    width: 197px;
    padding-left: 23px;
}

.font {
    width: 537px;
    padding-left: 20px;
}

.align {
    width: 322px;
    padding-left: 20px;
}

.wrap {
    width: 277px;
    padding-left: 25px;
}

.label {
    gap: 12px;
}

.number {
    width: 349px;
    padding-left: 19px;
}

.styles {
    display: flex;
    gap: 16px;
    width: 363px;
    padding-left: 26px;
}

.cells {
    width: 192px;
    padding-left: 25px;
}

.editing {
    display: flex;
    gap: 15px;
    width: 308px;
    padding-left: 25px;
}

.addin { width: 128px; }
.narrow { width: 120px; }
.last { flex: 1; }

.big {
    flex-direction: column;
    align-self: flex-start;
    line-height: 24px;
}

.big-icon {
    display: flex;
    align-items: center;
    justify-content: center;
    gap: 9px;
    height: 64px;
    margin-bottom: 9px;
}

.paste {
    align-items: flex-start;
}

.paste > span:last-child {
    padding-left: 8px;
}

.round {
    width: 64px;
    border-radius: 50%;
    background: #fff;
}

.list {
    display: flex;
    flex-direction: column;
    gap: 12px;
}

.list button {
    gap: 12px;
    height: 32px;
}

.clipboard .list button,
.snug button {
    gap: 8px;
}

/* Formula bar */
.formula-bar {
    display: flex;
    align-items: center;
    height: 58px;
    background: #fff;
    border-bottom: 6px double #999;
}

.name-box {
    display: flex;
    align-items: center;
    width: 160px;
    height: 52px;
    margin-right: 8px;
    border-right: 2px solid #c6c6c6;
    border-bottom: 2px solid #c6c6c6;
}

.name-box input {
    flex: 1;
    min-width: 0;
    padding: 0 10px;
    border: none;
}

.formula-bar > button {
    justify-content: center;
    width: 54px;
    margin-left: 5px;
}

.formula-bar .fx {
    width: 36px;
    font: 32px "Liberation Serif", serif;
    color: #333;
}

.fx-chev {
    margin: 0 4px;
    color: #bbb;
}

.formula {
    flex: 1;
    height: 40px;
    border: 2px solid #c6c6c6;
    border-right: none;
    border-radius: 4px 0 0 4px;
    background: #fdfdfd;
}

.formula-bar .expand {
    width: 48px;
    height: 40px;
    margin: 0;
    border: 2px solid #c6c6c6;
}

/* Worksheet */
.workspace {
    display: flex;
    flex: 1;
    min-height: 0;
}

.sheet {
    display: flex;
    flex: 1;
    flex-direction: column;
    min-width: 0;
    border-right: 2px solid #bdbdbd;
}

.cells-view {
    flex: 1;
    min-height: 0;
    overflow: hidden;
    background: #fff;
}

/* Last column runs past the edge of the view */
.cells-table {
    width: calc(100% + 28px);
    table-layout: fixed;
    border-collapse: separate;
    border-spacing: 0;
    font-family: "Liberation Sans", Arial, sans-serif;
    font-size: 21px;
    color: #000;
}

.col-head { width: 36px; }
.col-a { width: 384px; }
.col-m { width: 132px; }
.col-n { width: 168px; }

.cells-table th {
    padding: 0;
    border-right: 2px solid #e6e6e6;
    border-bottom: 2px solid #e6e6e6;
    background: #fafafa;
    font-family: Lato, sans-serif;
    font-size: 20px;
    font-weight: 400;
    color: #555;
}

.cells-table thead th {
    height: 44px;
    border-bottom-color: #b4b4b4;
}

.cells-table thead .corner {
    border-right-color: #b4b4b4;
    background: linear-gradient(to bottom right, #fafafa 50%, #dcdcdc 50%);
}

.cells-table thead .selected {
    border-bottom: 4px solid #2f6b3c;
    background: #efefef;
    color: #2f6b3c;
    font-weight: 700;
}

.cells-table tbody th {
    border-right-color: #b4b4b4;
    text-align: left;
}

.cells-table tr {
    height: 30px;
}

.cells-table td {
    padding: 2px 6px 0;
    border-right: 2px solid #cfcfcf;
    border-bottom: 2px solid #cfcfcf;
    line-height: 24px;
    text-align: right;
    white-space: nowrap;
}

.cells-table td:nth-child(2) {
    padding-left: 4px;
    text-align: left;
}

.framed td:not(:last-child) {
    border-bottom-color: #b4b4b4;
}

.cells-table .indent td:nth-child(2) {
    padding-left: 16px;
}

.cells-table .cut {
    height: 10px;
}

.cells-table .cut td {
    padding: 0;
    line-height: 8px;
}

.cut span {
    display: flex;
    align-items: flex-end;
    height: 8px;
    line-height: 20px;
    overflow: hidden;
}

.ebitda td {
    font-weight: 700;
    color: #28436b;
}

.strong td {
    font-weight: 700;
}

.cells-table .tax {
    height: 32px;
}

.cells-table .tax td:not(:last-child) {
    border-bottom: 4px solid #000;
}

.cells-table .net {
    height: 34px;
    font-weight: 700;
    color: #45a350;
}

.cells-table .net td:not(:last-child) {
    border-bottom: 6px double #000;
}

.cells-table .current th {
    border-right: 4px solid #2f6b3c;
    background: #efefef;
    color: #2f6b3c;
}

.cells-table .cursor {
    position: relative;
    outline: 4px solid #2f6b3c;
    outline-offset: -2px;
}

.cursor::after {
    content: "";
    position: absolute;
    right: -8px;
    bottom: -8px;
    width: 12px;
    height: 12px;
    border: 2px solid #fff;
    background: #2f6b3c;
}

.cells-table td.chart-cell:nth-child(2) {
    padding: 0;
}

.chart {
    width: 100%;
    height: 628px;
    font-family: Lato, sans-serif;
    fill: #444;
}

.chart-title {
    font-size: 26px;
    font-weight: 700;
    text-anchor: middle;
}

.tick { font-size: 16px; }
.axis { font-size: 18px; }
.mid { text-anchor: middle; }
.end { text-anchor: end; }

.gridline {
    stroke: #d4d4d4;
    stroke-width: 2px;
}

.series {
    fill: none;
    stroke-width: 5px;
    stroke-linecap: round;
    stroke-linejoin: round;
}

.orange { stroke: #e69142; }
.blue { stroke: #4b73b6; }

/* Sheet tabs */
.sheet-tabs {
    display: flex;
    height: 52px;
    border-top: 2px solid #c6c6c6;
    background: #efefef;
    color: #444;
}

.sheet-tabs > button {
    height: 42px;
    padding: 0 35px;
    border-right: 2px solid #cfcfcf;
}

.arrows {
    display: flex;
    gap: 28px;
    width: 112px;
    height: 42px;
    padding-left: 20px;
    border-right: 2px solid #cfcfcf;
}

.sheet-tabs .active {
    height: 46px;
    margin-top: -2px;
    border-bottom: 2px solid #999;
    border-radius: 0 0 6px 6px;
    background: #fff;
    color: #35733f;
    font-weight: 700;
}

.sheet-tabs .add {
    padding: 0 27px;
}

/* Task pane */
.pane {
    display: flex;
    flex: none;
    flex-direction: column;
    width: 957px;
    background: #fff;
}

.pane-tabs {
    display: flex;
    height: 54px;
    background: #f9f9f9;
    font-size: 25px;
    font-weight: 600;
}

.pane-tabs button {
    flex: 1;
    justify-content: space-between;
    padding: 0 16px;
    border-bottom: 2px solid #c6c6c6;
    background: #e2e2e2;
}

.pane-tabs .active {
    padding-right: 14px;
    border-right: 2px solid #c6c6c6;
    border-bottom: none;
    background: #f9f9f9;
}

.pane-head {
    display: flex;
    align-items: center;
    justify-content: space-between;
    height: 102px;
    padding: 0 46px 0 27px;
    border-bottom: 2px solid #f0f0f1;
}

.pane-actions {
    display: flex;
    gap: 12px;
}

.pane-actions button {
    justify-content: center;
    width: 60px;
    height: 60px;
    border: 2px solid #d2d2d6;
    border-radius: 12px;
}

.pane-actions .new {
    gap: 20px;
    width: 126px;
    border: none;
    background: #2c49b1;
    color: #fff;
    font-weight: 600;
}

.chat {
    flex: 1;
    padding: 24px 24px 0 58px;
    font-size: 27px;
    line-height: 40px;
}

.chat p {
    margin: 0;
}

.chat .bubble {
    width: fit-content;
    margin: 0 0 90px auto;
    padding: 24px;
    border-radius: 44px;
    background: #f4f4f4;
}

.reply {
    display: flex;
    gap: 27px;
    padding-right: 48px;
}

.reply-body {
    flex: 1;
}

.reply h2 {
    margin: 0 0 18px;
    font-size: 24px;
    font-weight: 600;
    line-height: 26px;
    color: #111;
}

.status {
    gap: 20px;
    width: 100%;
    height: 68px;
    margin-bottom: 34px;
    padding: 0 28px;
    border: 2px solid #e8e8ea;
    border-radius: 14px;
    font-size: 24px;
}

.status .end {
    margin-left: auto;
}

.chat ul {
    margin: 16px 0 24px;
    padding-left: 48px;
}

.chat li + li {
    margin-top: 8px;
}

.chat b {
    font-weight: 600;
}

.reactions {
    display: flex;
    margin-top: 30px;
    margin-left: -4px;
}

.reactions button {
    justify-content: center;
    width: 68px;
    height: 36px;
}

.agent-bar {
    display: flex;
    align-items: center;
    justify-content: space-between;
    height: 112px;
    padding: 0 52px 0 24px;
    background: #f8f8f8;
}

.agent {
    gap: 14px;
    height: 72px;
    padding: 0 18px 0 12px;
    border: 2px solid #d2d2d6;
    border-radius: 14px;
    background: #fff;
    font-size: 27px;
    box-shadow: 0 2px 3px #e4e4e4;
}

.faint {
    color: #999;
}

.agent-tools {
    display: flex;
    gap: 52px;
}

.composer {
    display: flex;
    flex-direction: column;
    height: 357px;
    padding: 16px 16px 18px;
}

.context {
    display: flex;
    align-items: center;
    gap: 10px;
    height: 68px;
    padding-left: 24px;
    border: 2px solid #e2e2e6;
    border-radius: 14px;
    background: #f9f9f9;
    font-size: 24px;
    color: #333;
}

.composer textarea {
    height: 112px;
    margin: 46px 24px 0 22px;
    padding: 0;
    border: none;
    background: none;
    resize: none;
    overflow: hidden;
    font-size: 27px;
    line-height: 56px;
}

.composer textarea::placeholder {
    color: #9a9aa4;
}

.composer-bar {
    display: flex;
    align-items: center;
    gap: 40px;
    margin-top: auto;
    padding-left: 16px;
    font-size: 27px;
}

.tools {
    gap: 20px;
}

.mic {
    margin-left: auto;
    margin-right: -14px;
}

.send {
    justify-content: center;
    width: 60px;
    height: 60px;
    border-radius: 14px;
    background: #9dba9f;
}

/* Status bar */
.statusbar {
    display: flex;
    align-items: center;
    gap: 42px;
    height: 55px;
    padding: 0 48px 0 38px;
    border-top: 2px solid #b4b4b4;
    color: #555;
}

.access,
.loading {
    display: flex;
    align-items: center;
    gap: 12px;
}

.status-right {
    display: flex;
    align-items: center;
    gap: 14px;
    margin-left: auto;
}

.view {
    justify-content: center;
    width: 56px;
    height: 44px;
    border-radius: 6px;
}

.view.on {
    width: 62px;
    margin-left: 10px;
    background: #b0b0b0;
}

.zoom {
    appearance: none;
    width: 200px;
    height: 8px;
    margin: 0;
    border-radius: 4px;
    background: #aaa;
}

.zoom::-webkit-slider-thumb {
    appearance: none;
    width: 32px;
    height: 32px;
    border-radius: 50%;
    background: #fff;
    box-shadow: 0 1px 3px #888;
}

.percent {
    margin-left: 18px;
}
```
